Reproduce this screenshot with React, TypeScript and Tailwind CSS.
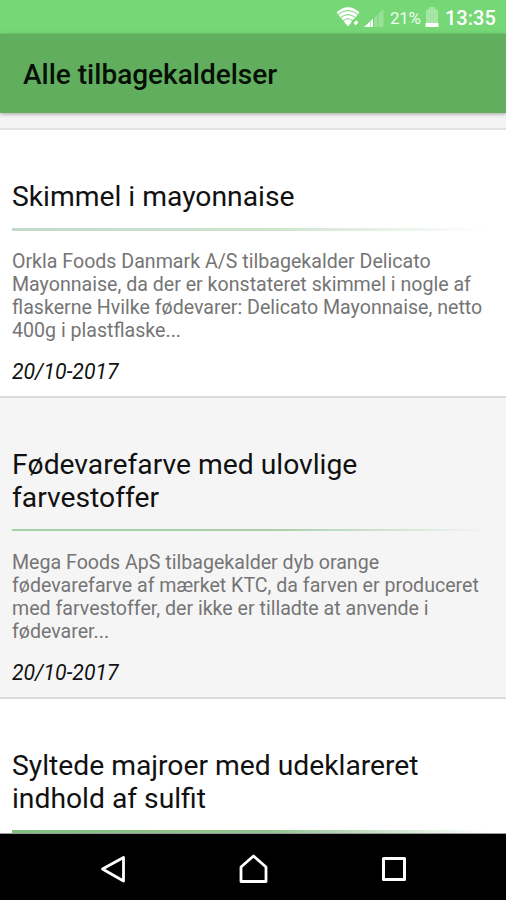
type Recall = {
  id: number;
  lines: string[];
  body: string[];
  date: string;
  card: string;
  rule: string;
};

const recalls: Recall[] = [
  {
    id: 1,
    lines: ["Skimmel i mayonnaise"],
    body: [
      "Orkla Foods Danmark A/S tilbagekalder Delicato",
      "Mayonnaise, da der er konstateret skimmel i nogle af",
      "flaskerne Hvilke fødevarer: Delicato Mayonnaise, netto",
      "400g i plastflaske...",
    ],
    date: "20/10-2017",
    card: "h-[268px] bg-white",
    rule: "h-[3px] from-[#c5d9cb] via-[#cfe3cd]",
  },
  {
    id: 2,
    lines: ["Fødevarefarve med ulovlige", "farvestoffer"],
    body: [
      "Mega Foods ApS tilbagekalder dyb orange",
      "fødevarefarve af mærket KTC, da farven er produceret",
      "med farvestoffer, der ikke er tilladte at anvende i",
      "fødevarer...",
    ],
    date: "20/10-2017",
    card: "h-[301px] bg-[#f5f5f5]",
    rule: "h-[2px] from-[#a5d0a7] via-[#a9cfab]",
  },
  {
    id: 3,
    lines: ["Syltede majroer med udeklareret", "indhold af sulfit"],
    body: [],
    date: "",
    card: "h-[301px] bg-white",
    rule: "h-[3px] from-[#82bd80] via-[#93c592]",
  },
];

function StatusBar() {
  return (
    <div className="flex h-[34px] shrink-0 items-center justify-end bg-[#76d776] pr-[11px] text-white">
      <svg width="25" height="22" viewBox="0 0 25 22" className="mr-[3px]">
        <path d="M0.500 6.500Q12 -4 23.500 6.500L12 20.500Z" fill="#fff" />
        <g fill="none" stroke="#76d776" strokeWidth="1">
          <path d="M2 8.500Q12 0.500 22 8.500" />
          <path d="M4.500 11.700Q12 5.500 19.500 11.700" />
          <path d="M7 15Q12 10.500 17 15" />
        </g>
        <path d="M15.500 21V15L20 11.500H25V21Z" fill="#76d776" />
        <path d="M17.500 16.500L19.500 15.500V14L22.500 16L19.500 19.500Z" fill="#fff" />
      </svg>
      <svg width="20" height="18" viewBox="0 0 20 18" className="mt-[2px] mr-[6px]">
        <path d="M0 18L6 12.500V18ZM6.500 12L9 9.700V18H6.500Z" fill="#fff" />
        <path d="M10 9L13.500 5.700V18H10ZM14.500 4.800L19.500 0V18H14.500Z" fill="#98e198" />
      </svg>
      <span className="w-[31px] pt-[2px] text-[17px] leading-[32px] tracking-[-0.3px] whitespace-nowrap text-[#effbef]">21%</span>
      <svg width="14" height="20" viewBox="0 0 14 20" className="mr-[6px] ml-[4px]">
        <path d="M4 0h6v2.500h3V20H1V2.500h3z" fill="#a4e5a4" />
        <path d="M0.500 16h13v4H0.500z" fill="#fff" />
      </svg>
      <span className="w-[50px] pt-[2px] text-[20px] leading-[32px] font-medium whitespace-nowrap">13:35</span>
    </div>
  );
}

function RecallCard({ recall }: { recall: Recall }) {
  return (
    <article className={`shrink-0 border-b-2 border-[#dcdcdc] px-3 pt-[50px] ${recall.card}`}>
      <h2 className="text-[28.25px] leading-[33px] text-[#111]">
        {recall.lines.map((line) => (
          <span key={line} className="block whitespace-nowrap">{line}</span>
        ))}
      </h2>
      <div className="mt-[15px] h-[3px]">
        <div className={`w-[476px] bg-linear-to-r via-55% to-transparent ${recall.rule}`} />
      </div>
      <p className="mt-[19px] h-[92px] text-[19.6px] leading-[23px] text-[#757575]">
        {recall.body.map((line) => (
          <span key={line} className="block whitespace-nowrap">{line}</span>
        ))}
      </p>
      <p className="mt-[18px] text-[21.2px] leading-[23px] text-[#111] italic">{recall.date}</p>
    </article>
  );
}

function NavBar() {
  return (
    <nav className="flex h-[67px] shrink-0 items-center justify-between border-t border-[#999] bg-black pt-[4px] pr-[99px] pl-[100px]">
      <svg width="26" height="30" viewBox="0 0 26 30" fill="none" stroke="#fff" strokeWidth="2.800" strokeLinejoin="round">
        <path d="M23.500 3.500V27L2.500 15Z" />
      </svg>
      <svg width="30" height="30" viewBox="0 0 30 30" fill="none" stroke="#fff" strokeWidth="2.800" strokeLinejoin="round">
        <path d="M2 13L14.500 2L27 13V27.500H2Z" />
      </svg>
      <svg width="26" height="26" viewBox="0 0 26 26" fill="none" stroke="#fff" strokeWidth="3" strokeLinejoin="round">
        <path d="M2.500 2.500H23.500V23.500H2.500Z" />
      </svg>
    </nav>
  );
}

export default function App() {
  return (
    <div className="flex h-[900px] w-[506px] flex-col overflow-hidden bg-[#f4f4f4] font-[Roboto,sans-serif]">
      <StatusBar />
      <header className="z-10 flex h-[79px] shrink-0 items-center bg-[#62ae5f] pl-[23px] shadow-[0_1px_4px_rgba(0,0,0,0.35)]">
        <h1 className="pt-[2px] text-[28px] leading-[32px] font-medium text-[#061006]">Alle tilbagekaldelser</h1>
      </header>
      <main className="flex min-h-0 flex-1 flex-col overflow-hidden pt-[15px]">
        <div className="h-[2px] shrink-0 bg-[#e2e2e2]" />
        {recalls.map((recall) => (
          <RecallCard key={recall.id} recall={recall} />
        ))}
      </main>
      <NavBar />
    </div>
  );
}
